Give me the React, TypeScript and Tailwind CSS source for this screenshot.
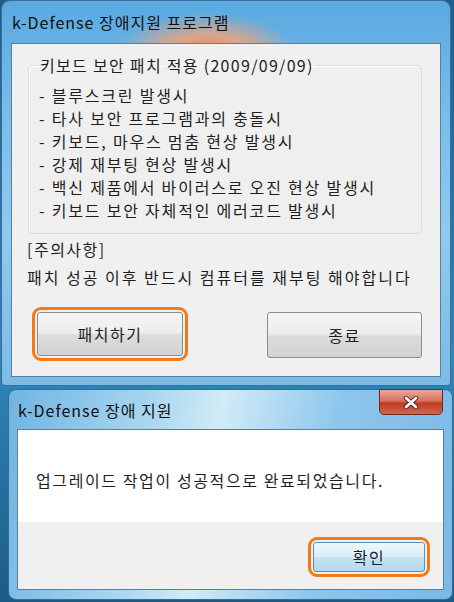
import React from 'react';

const font = { fontFamily: '"Noto Sans CJK KR", "Noto Sans", sans-serif' };

const items = [
    '- 블루스크린 발생시',
    '- 타사 보안 프로그램과의 충돌시',
    '- 키보드, 마우스 멈춤 현상 발생시',
    '- 강제 재부팅 현상 발생시',
    '- 백신 제품에서 바이러스로 오진 현상 발생시',
    '- 키보드 보안 자체적인 에러코드 발생시',
];

const App = () => {
    return (
        <div style={font} className="w-[454px] h-[602px] overflow-hidden bg-[linear-gradient(180deg,#1c5f8c_0%,#2f86b8_60%,#1d5b86_100%)] text-[#1e1e1e]">
            {/* main window */}
            <div className="ml-[1px] w-[450px] h-[386px] rounded-t-[9px] rounded-b-[4px] border border-[#3d6f94] bg-[radial-gradient(ellipse_90px_40px_at_205px_52px,#e98a5a_0%,#d9a58a_45%,transparent_100%),linear-gradient(180deg,#5aa9e0_0%,#79bdea_30%,#8fcaef_60%,#7cbbe6_100%)] px-[9px] flex flex-col">
                <div className="h-[42px] flex items-center pl-[1px] text-[16px] text-[#111] tracking-[1px]">
                    k-Defense 장애지원 프로그램
                </div>
                <div className="h-[334px] border border-[#5b7f9c] bg-[#f0f0f0] px-[16px] pt-[11px]">
                    <fieldset className="w-[394px] h-[179px] border border-[#dcdcdc] rounded-[4px] pl-[10px] bg-[#efefef] shadow-[inset_1px_1px_0_#fff]">
                        <legend className="px-[1px] text-[16px] leading-[20px] tracking-[1.3px]">키보드 보안 패치 적용 (2009/09/09)</legend>
                        <ul className="mt-[9px] flex flex-col">
                            {items.map((t) => (
                                <li key={t} className="text-[16px] leading-[23px] whitespace-nowrap tracking-[1.8px]">{t}</li>
                            ))}
                        </ul>
                    </fieldset>
                    <div className="-ml-[1px] mt-[3px] text-[16px] leading-[24px] tracking-[1.5px]">[주의사항]</div>
                    <div className="-ml-[1px] mt-[4px] text-[16px] leading-[24px] whitespace-nowrap tracking-[2px]">패치 성공 이후 반드시 컴퓨터를 재부팅 해야합니다</div>
                    <div className="mt-[18px] flex items-center">
                        <div className="ml-[4px] rounded-[9px] border-[3px] border-[#f47a18] p-[2px]">
                            <button className="w-[146px] h-[44px] rounded-[3px] border border-[#8c8c8c] bg-[linear-gradient(180deg,#f6f6f6_0%,#ececec_48%,#dcdcdc_52%,#d2d2d2_100%)] text-[16px] tracking-[1.5px]">
                                패치하기
                            </button>
                        </div>
                        <button className="ml-[79px] mt-[1px] w-[155px] h-[46px] rounded-[3px] border border-[#8c8c8c] bg-[linear-gradient(180deg,#f6f6f6_0%,#ececec_48%,#dcdcdc_52%,#d2d2d2_100%)] text-[16px] tracking-[1.5px]">
                            종료
                        </button>
                    </div>
                </div>
            </div>

            {/* completion dialog */}
            <div className="relative mt-[3px] ml-[8px] w-[445px] h-[211px] rounded-t-[8px] rounded-b-[8px] border border-[#3a6a8e] bg-[linear-gradient(100deg,#6fb4e3_0%,#a9d6f0_30%,#d2ebf7_45%,#8cc6ec_70%,#7ab9e6_100%)] px-[8px] flex flex-col">
                <div className="h-[39px] flex items-center pl-[1px] text-[16px] text-[#111] tracking-[1px]">
                    k-Defense 장애 지원
                </div>
                <div className="absolute top-[-1px] right-[9px] w-[64px] h-[26px] rounded-b-[5px] border border-[#6e2a22] bg-[linear-gradient(180deg,#e9a89c_0%,#d8705f_45%,#c23a22_55%,#d2654c_100%)] flex items-center justify-center">
                    <svg width="16" height="13" viewBox="0 0 16 13">
                        <path d="M3 2 L13 11 M13 2 L3 11" stroke="#5a2a22" strokeWidth="4.5" strokeLinecap="round" />
                        <path d="M3 2 L13 11 M13 2 L3 11" stroke="#ffffff" strokeWidth="2.6" strokeLinecap="round" />
                    </svg>
                </div>
                <div className="h-[161px] border border-[#5b7f9c] bg-[#f0f0f0] flex flex-col">
                    <div className="h-[92px] bg-white flex items-center pl-[18px] pt-[8px] text-[16px] whitespace-nowrap tracking-[1.6px]">
                        업그레이드 작업이 성공적으로 완료되었습니다.
                    </div>
                    <div className="flex-1 flex justify-end items-start pt-[15px] pr-[13px]">
                        <div className="rounded-[9px] border-[3px] border-[#f47a18] p-[2px]">
                            <button className="w-[112px] h-[30px] rounded-[3px] border border-[#5a90b8] bg-[linear-gradient(180deg,#eef7fc_0%,#dcedf8_48%,#c4e2f4_52%,#b4d9f0_100%)] text-[16px] tracking-[1.5px]">
                                확인
                            </button>
                        </div>
                    </div>
                </div>
            </div>
        </div>
    );
};

export default App;
